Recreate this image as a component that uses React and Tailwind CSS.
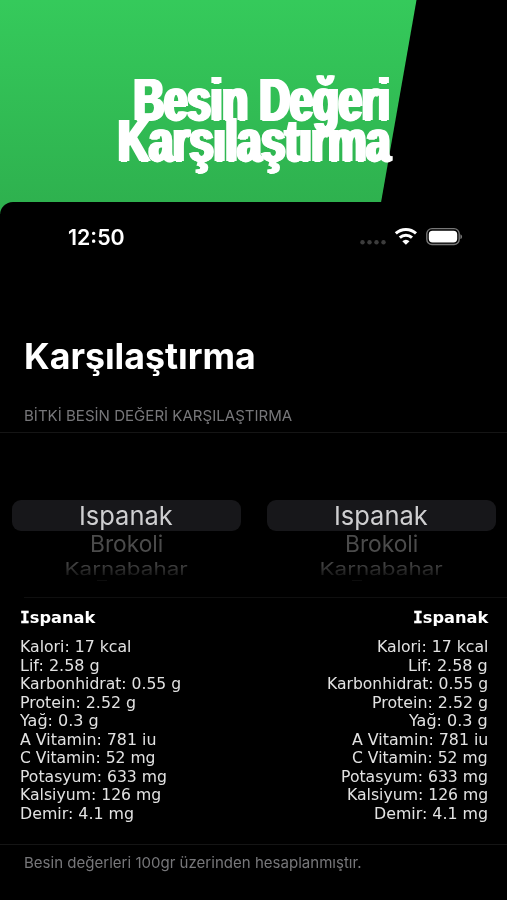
import { useLayoutEffect, useRef, useState } from "react";

// Scales a line of text horizontally so that it is exactly `width` pixels wide.
function Fit({ width, align = "left", sy = 1, className = "", children }) {
  const ref = useRef(null);
  const [scale, setScale] = useState(1);
  useLayoutEffect(() => {
    setScale(width / ref.current.offsetWidth);
  }, []);
  const origin = align === "right" ? "100% 50%" : align === "center" ? "50% 50%" : "0% 50%";
  return (
    <span
      ref={ref}
      className={`inline-block shrink-0 whitespace-nowrap ${className}`}
      style={{ transform: `scale(${scale}, ${sy})`, transformOrigin: origin }}
    >
      {children}
    </span>
  );
}

const facts = [
  ["Kalori: 17 kcal", 111],
  ["Lif: 2.58 g", 80],
  ["Karbonhidrat: 0.55 g", 161],
  ["Protein: 2.52 g", 116],
  ["Yağ: 0.3 g", 79],
  ["A Vitamin: 781 iu", 136],
  ["C Vitamin: 52 mg", 136],
  ["Potasyum: 633 mg", 147],
  ["Kalsiyum: 126 mg", 141],
  ["Demir: 4.1 mg", 114],
];

function Facts({ align }) {
  const side = align === "right" ? "items-end" : "items-start";
  return (
    <div className={`flex flex-col font-['DejaVu_Sans',sans-serif] ${side}`}>
      <Fit width={75} align={align} className="h-[30px] text-[16px] leading-[20px] font-bold text-white">
        <span className="font-['DejaVu_Sans_Mono',monospace] [-webkit-text-stroke:0.3px_white]">I</span>spanak
      </Fit>
      {facts.map(([text, width]) => (
        <Fit key={text} width={width} align={align} className="h-[18.55px] text-[15px] leading-[18.55px] text-[#e2e2e2]">
          {text}
        </Fit>
      ))}
    </div>
  );
}

function Wheel() {
  return (
    <div className="flex w-[229px] flex-col items-center">
      <div className="flex h-[31px] w-full items-center justify-center rounded-[9px] bg-[#17171a] pr-[2px] text-[#cfcfd1]">
        <Fit width={94} align="center" className="text-[26px] leading-[31px]">Ispanak</Fit>
      </div>
      <div className="flex h-[28px] items-center text-[#4b4b4b]">
        <Fit width={73} align="center" sy={0.93} className="text-[24px] leading-[28px]">Brokoli</Fit>
      </div>
      <div className="flex h-[20px] items-center text-[#404040] [mask-image:linear-gradient(to_bottom,black_30%,rgba(0,0,0,0.35)_85%)]">
        <Fit width={123} align="center" sy={0.74} className="text-[23px] leading-[20px]">Karnabahar</Fit>
      </div>
      <div className="mt-px mr-[49px] h-px w-[10px] bg-[#0d0d0d]" />
    </div>
  );
}

function Status() {
  return (
    <div className="flex h-[70px] items-center justify-between pr-[44px] pl-[68px]">
      <Fit width={57} className="pt-px text-[21px] leading-[24px] font-semibold text-white">12:50</Fit>
      <svg width="104" height="20" viewBox="0 0 104 20" className="block">
        <g fill="#3c3c3c">
          <circle cx="3.5" cy="15.3" r="2.2" />
          <circle cx="10.5" cy="15.3" r="2.2" />
          <circle cx="17.5" cy="15.3" r="2.2" />
          <circle cx="24.5" cy="15.3" r="2.2" />
        </g>
        <g fill="none" stroke="#fff" strokeWidth="3">
          <path d="M36.8 6.3a15 15 0 0 1 20.2 0" />
          <path d="M40.8 10.7a9 9 0 0 1 12.2 0" />
        </g>
        <path d="M46.9 17.8l-3.6-3.6a5 5 0 0 1 7.2 0z" fill="#fff" />
        <rect x="67.8" y="1.6" width="32.4" height="15.9" rx="5.2" fill="none" stroke="#777" strokeWidth="1.4" />
        <rect x="69.8" y="3.7" width="28.4" height="11.8" rx="3.7" fill="#fff" />
        <path d="M101.4 7.2c2.2.7 2.2 4.2 0 4.9z" fill="#777" />
      </svg>
    </div>
  );
}

export default function App() {
  return (
    <div className="h-[900px] w-[507px] overflow-hidden bg-black font-['Inter',sans-serif]">
      <header className="h-[214px] w-full bg-gradient-to-b from-[#35ca5b] to-[#2eb04e] [clip-path:polygon(0_0,416.5px_0,379px_100%,0_100%)]" />
      <div className="relative -mt-[12px] h-[698px] rounded-tl-[13px] bg-black">
        <h1 className="absolute top-[-123px] right-[117px] flex flex-col items-end font-['Liberation_Sans_Narrow','Liberation_Sans',sans-serif] text-[60px] leading-[41.3px] font-bold text-white [text-shadow:3px_0_white,-3px_0_white,1.5px_0_white,-1.5px_0_white,0_0.5px_white]">
          <Fit width={256} align="right">Besin Değeri</Fit>
          <Fit width={272} align="right">Karşılaştırma</Fit>
        </h1>
        <Status />
        <h2 className="mt-[62px] pl-[24px] text-[36px] leading-[44px] font-bold text-white">
          <Fit width={232}>Karşılaştırma</Fit>
        </h2>
        <p className="mt-[28px] h-[27px] border-b border-[#151515] pl-[24px] text-[15px] leading-[20px] text-[#77777a]">
          <Fit width={268}>BİTKİ BESİN DEĞERİ KARŞILAŞTIRMA</Fit>
        </p>
        <section className="flex h-[164px] justify-between pt-[67px] pr-[11px] pl-[12px]">
          <Wheel />
          <Wheel />
        </section>
        <div className="ml-[24px] h-px bg-[#0f0f0f]" />
        <section className="flex h-[247px] justify-between border-b border-[#151515] pt-[10px] pr-[19px] pl-[20px]">
          <Facts align="left" />
          <Facts align="right" />
        </section>
        <p className="mt-[8px] pl-[24px] text-[15px] leading-[20px] text-[#77777a]">
          <Fit width={338}>Besin değerleri 100gr üzerinden hesaplanmıştır.</Fit>
        </p>
      </div>
    </div>
  );
}
